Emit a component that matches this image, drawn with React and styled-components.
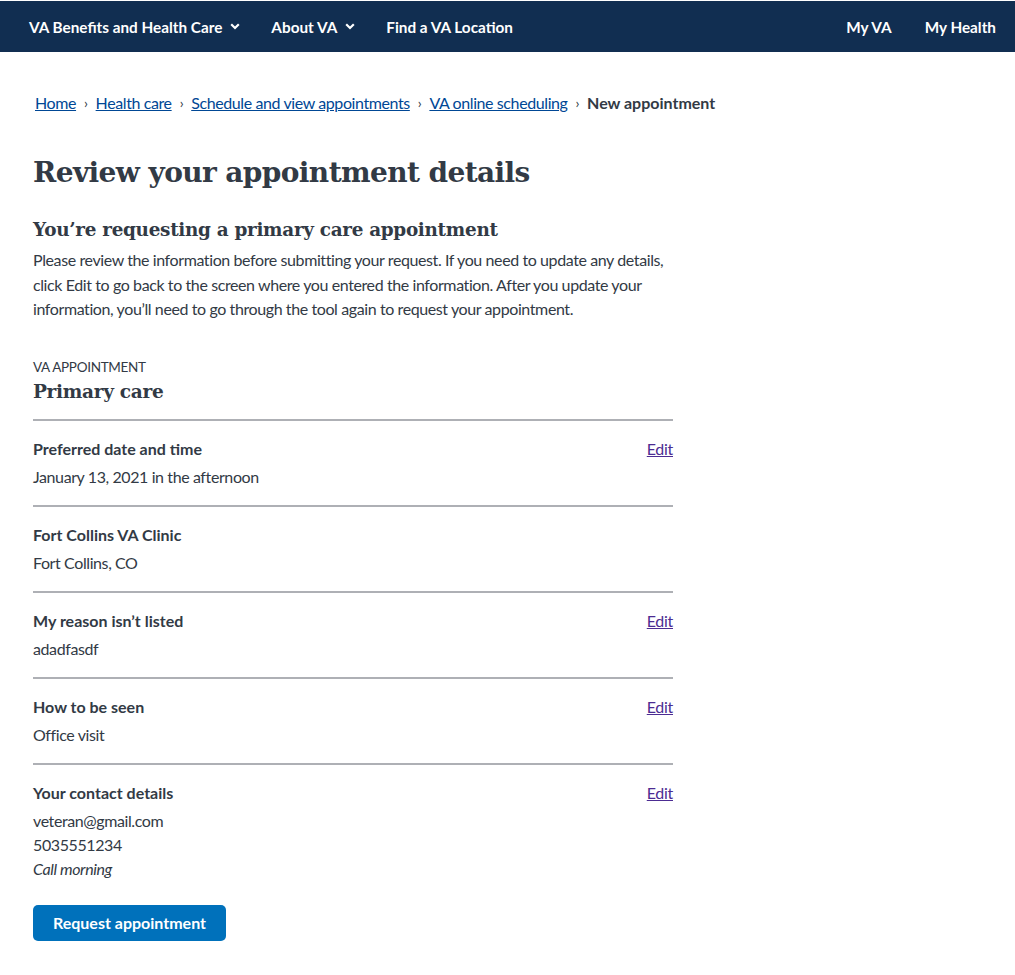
import styled, { createGlobalStyle } from 'styled-components';

const GlobalStyle = createGlobalStyle`
  body {
    margin: 0;
    background: #fff;
    font-family: Lato, "Noto Sans", sans-serif;
    color: #323a45;
  }
`;

const NavBar = styled.nav`
  height: 51px;
  background: #112e51;
  border-top: 1px solid #fff;
  display: flex;
  align-items: center;
  justify-content: space-between;
  padding: 0 19px 0 29px;
`;

const NavGroup = styled.div`
  display: flex;
  align-items: center;
  gap: ${p => p.$gap || 31}px;
`;

const NavItem = styled.span`
  display: inline-flex;
  align-items: center;
  gap: 8px;
  color: #fff;
  font-size: 15.3px;
  font-weight: 700;
`;

const Chevron = () => (
  <svg width="10" height="7" viewBox="0 0 10 7">
    <polyline points="1.2,1.2 5,5 8.8,1.2" fill="none" stroke="#fff" strokeWidth="2.2" />
  </svg>
);

const Main = styled.main`
  padding: 36px 0 40px 33px;
`;

const Crumbs = styled.ol`
  list-style: none;
  margin: 0 0 0 2px;
  padding: 0;
  display: flex;
  align-items: center;
  white-space: nowrap;
  font-size: 16px;
  line-height: 30px;
  letter-spacing: -0.4px;
`;

const Crumb = styled.li`
  display: flex;
  align-items: center;
  a {
    color: #004795;
    text-decoration: underline;
  }
  &:not(:last-child)::after {
    content: '›';
    margin: 0 8px;
    font-size: 14px;
    color: #323a45;
  }
  &:last-child {
    font-weight: 700;
    letter-spacing: 0;
  }
`;

const Title = styled.h1`
  font-family: "DejaVu Serif", serif;
  font-size: 28px;
  font-weight: 700;
  letter-spacing: -0.6px;
  line-height: 40px;
  margin: 35px 0 23px;
`;

const Subtitle = styled.h2`
  font-family: "DejaVu Serif", serif;
  font-size: 18.4px;
  font-weight: 700;
  letter-spacing: -0.3px;
  line-height: 28px;
  margin: 0 0 4px;
`;

const Intro = styled.p`
  width: 640px;
  font-size: 16px;
  line-height: 24.5px;
  letter-spacing: -0.4px;
  margin: 0 0 35px;
`;

const Eyebrow = styled.div`
  font-size: 13.5px;
  text-transform: uppercase;
  letter-spacing: -0.3px;
  line-height: 20px;
`;

const TypeTitle = styled.h3`
  font-family: "DejaVu Serif", serif;
  font-size: 18.5px;
  font-weight: 700;
  letter-spacing: -0.3px;
  line-height: 30px;
  margin: 0 0 12px;
`;

const Rows = styled.div`
  width: 640px;
`;

const Row = styled.section`
  border-top: 2px solid #aeb0b5;
  padding: 16px 0;
  display: flex;
  justify-content: space-between;
  align-items: flex-start;
`;

const Label = styled.div`
  font-weight: 700;
  font-size: 16px;
  line-height: 24px;
  margin-bottom: 4px;
`;

const Value = styled.div`
  font-size: 16px;
  line-height: 24px;
  letter-spacing: -0.4px;
  font-style: ${p => (p.$italic ? 'italic' : 'normal')};
`;

const EditLink = styled.a`
  color: #4c2c92;
  text-decoration: underline;
  font-size: 16px;
  line-height: 24px;
  letter-spacing: -0.3px;
`;

const SubmitButton = styled.button`
  margin-top: 8px;
  background: #0071bb;
  color: #fff;
  border: 0;
  border-radius: 5px;
  height: 36px;
  width: 193px;
  padding: 0;
  font-family: Lato, "Noto Sans", sans-serif;
  font-size: 16px;
  font-weight: 700;
  cursor: pointer;
`;

const rows = [
  { label: 'Preferred date and time', values: ['January 13, 2021 in the afternoon'], edit: true },
  { label: 'Fort Collins VA Clinic', values: ['Fort Collins, CO'], edit: false },
  { label: 'My reason isn’t listed', values: ['adadfasdf'], edit: true },
  { label: 'How to be seen', values: ['Office visit'], edit: true },
  {
    label: 'Your contact details',
    values: ['veteran@gmail.com', '5035551234'],
    note: 'Call morning',
    edit: true,
  },
];

const crumbs = ['Home', 'Health care', 'Schedule and view appointments', 'VA online scheduling'];

export default function App() {
  return (
    <>
      <GlobalStyle />
      <NavBar>
        <NavGroup>
          <NavItem>VA Benefits and Health Care <Chevron /></NavItem>
          <NavItem>About VA <Chevron /></NavItem>
          <NavItem>Find a VA Location</NavItem>
        </NavGroup>
        <NavGroup $gap={33}>
          <NavItem>My VA</NavItem>
          <NavItem>My Health</NavItem>
        </NavGroup>
      </NavBar>
      <Main>
        <Crumbs>
          {crumbs.map(c => (
            <Crumb key={c}><a href="#">{c}</a></Crumb>
          ))}
          <Crumb>New appointment</Crumb>
        </Crumbs>
        <Title>Review your appointment details</Title>
        <Subtitle>You’re requesting a primary care appointment</Subtitle>
        <Intro>
          Please review the information before submitting your request. If you need to update any
          details, click Edit to go back to the screen where you entered the information. After you
          update your information, you’ll need to go through the tool again to request your
          appointment.
        </Intro>
        <Eyebrow>VA Appointment</Eyebrow>
        <TypeTitle>Primary care</TypeTitle>
        <Rows>
          {rows.map(r => (
            <Row key={r.label}>
              <div>
                <Label>{r.label}</Label>
                {r.values.map(v => (
                  <Value key={v}>{v}</Value>
                ))}
                {r.note && <Value $italic>{r.note}</Value>}
              </div>
              {r.edit && <EditLink href="#">Edit</EditLink>}
            </Row>
          ))}
        </Rows>
        <SubmitButton>Request appointment</SubmitButton>
      </Main>
    </>
  );
}
